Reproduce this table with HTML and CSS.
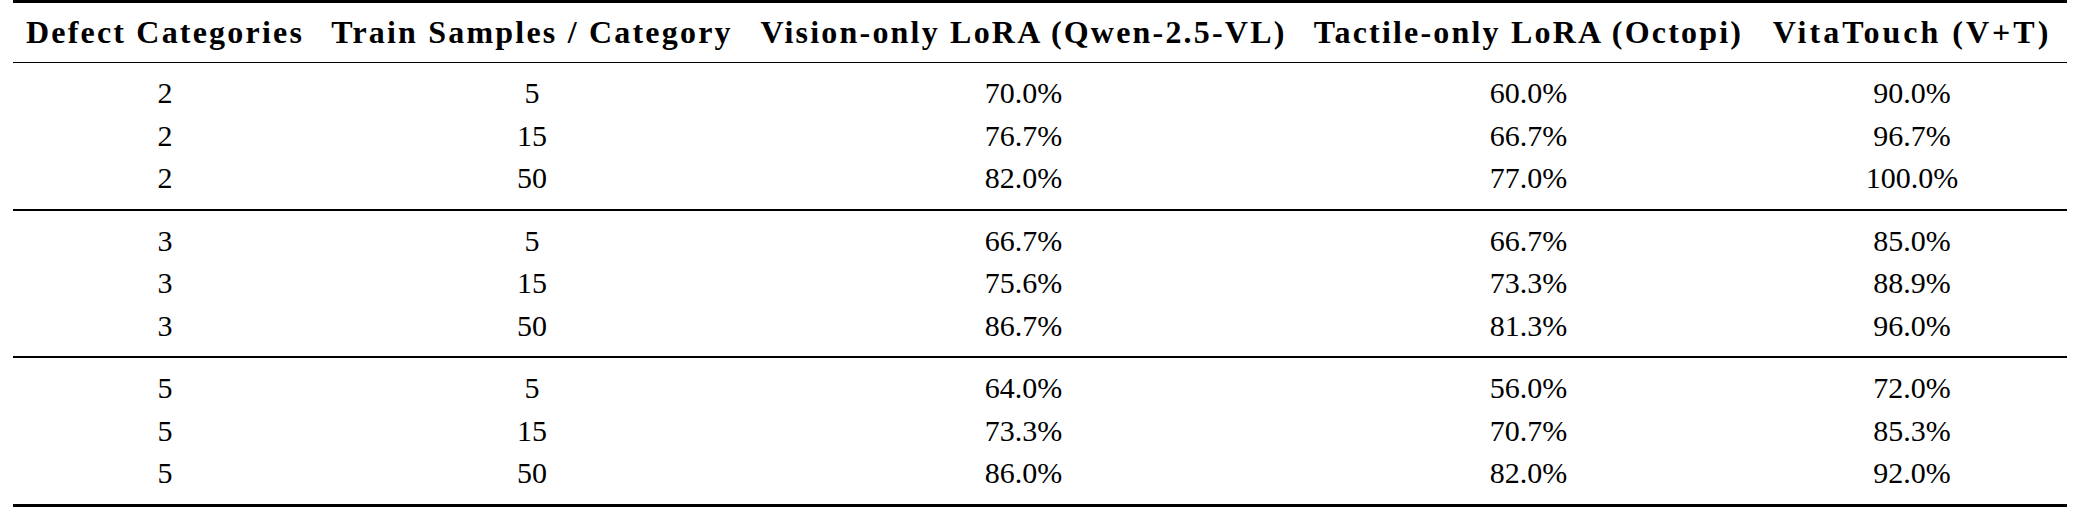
FILE: index.html
```html
<!DOCTYPE html>
<html lang="en">
<head>
<meta charset="utf-8">
<title>Defect classification results</title>
<link rel="stylesheet" href="styles.css">
</head>
<body>
<div class="page">
<table class="results">
  <colgroup>
    <col class="c1"><col class="c2"><col class="c3"><col class="c4"><col class="c5">
  </colgroup>
  <thead>
    <tr>
      <th>Defect Categories</th>
      <th>Train Samples / Category</th>
      <th>Vision-only LoRA (Qwen-2.5-VL)</th>
      <th>Tactile-only LoRA (Octopi)</th>
      <th class="wide">VitaTouch (V+T)</th>
    </tr>
  </thead>
  <tbody>
    <tr class="first"><td>2</td><td>5</td><td>70.0%</td><td>60.0%</td><td>90.0%</td></tr>
    <tr><td>2</td><td>15</td><td>76.7%</td><td>66.7%</td><td>96.7%</td></tr>
    <tr class="last"><td>2</td><td>50</td><td>82.0%</td><td>77.0%</td><td>100.0%</td></tr>
  </tbody>
  <tbody>
    <tr class="first"><td>3</td><td>5</td><td>66.7%</td><td>66.7%</td><td>85.0%</td></tr>
    <tr><td>3</td><td>15</td><td>75.6%</td><td>73.3%</td><td>88.9%</td></tr>
    <tr class="last"><td>3</td><td>50</td><td>86.7%</td><td>81.3%</td><td>96.0%</td></tr>
  </tbody>
  <tbody class="end">
    <tr class="first"><td>5</td><td>5</td><td>64.0%</td><td>56.0%</td><td>72.0%</td></tr>
    <tr><td>5</td><td>15</td><td>73.3%</td><td>70.7%</td><td>85.3%</td></tr>
    <tr class="last"><td>5</td><td>50</td><td>86.0%</td><td>82.0%</td><td>92.0%</td></tr>
  </tbody>
</table>
</div>
</body>
</html>
```

FILE: styles.css
```css
html, body {
  margin: 0;
  padding: 0;
  background: #ffffff;
}

.page {
  padding: 0 17px 0 13px;
}

.results {
  width: 2054px;
  border-collapse: collapse;
  table-layout: fixed;
  font-family: "Liberation Serif", "Times New Roman", serif;
  color: #000000;
  border-top: 3px solid #000000;
  border-bottom: 3px solid #000000;
}

.c1 { width: 304px; }
.c2 { width: 430px; }
.c3 { width: 553px; }
.c4 { width: 457px; }
.c5 { width: 310px; }

.results th {
  height: 59px;
  padding: 0;
  font-size: 32px;
  font-weight: bold;
  letter-spacing: 2.2px;
  line-height: 59px;
  text-align: center;
  white-space: nowrap;
  border-bottom: 1px solid #000000;
}

.results th.wide {
  letter-spacing: 3px;
}

.results td {
  height: 42.5px;
  padding: 0;
  font-size: 30px;
  line-height: 42.5px;
  text-align: center;
  white-space: nowrap;
}

.results tr.first td {
  padding-top: 9px;
}

.results tr.last td {
  padding-bottom: 9px;
}

.results tbody {
  border-bottom: 2px solid #000000;
}

.results tbody.end {
  border-bottom: 3px solid #000000;
}
```
